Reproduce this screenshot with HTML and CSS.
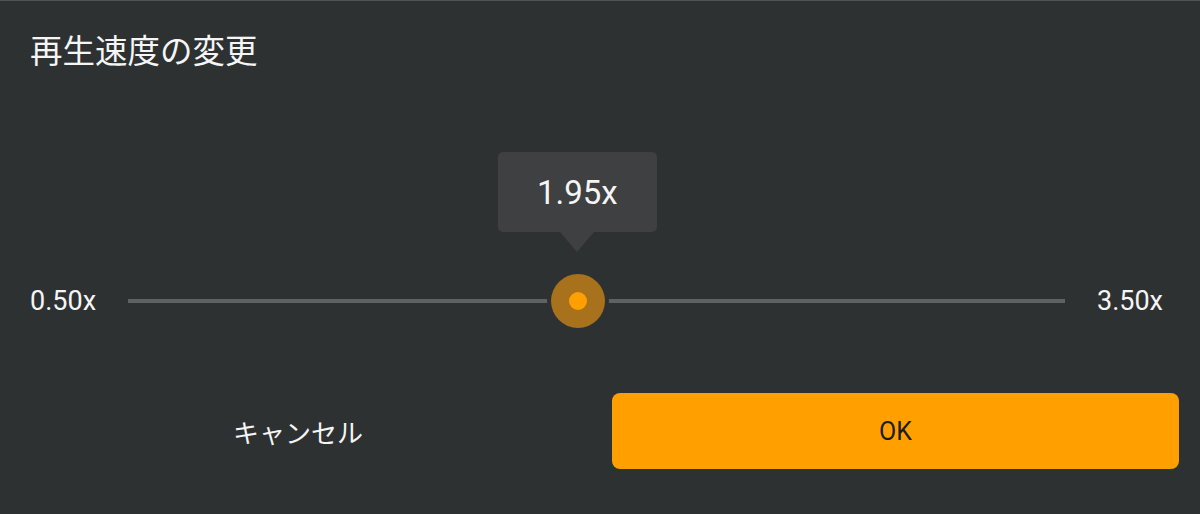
FILE: index.html
```html
<!DOCTYPE html>
<html lang="ja">
<head>
<meta charset="utf-8">
<title>再生速度の変更</title>
<link rel="stylesheet" href="styles.css">
</head>
<body>
<div class="dialog">
  <h1 class="title">再生速度の変更</h1>
  <div class="slider-row">
    <span class="range-label">0.50x</span>
    <div class="track">
      <div class="thumb-anchor" style="left: 48%">
        <div class="tooltip">1.95x</div>
        <div class="thumb"><div class="thumb-dot"></div></div>
      </div>
    </div>
    <span class="range-label">3.50x</span>
  </div>
  <div class="actions">
    <button class="btn btn-cancel">キャンセル</button>
    <button class="btn btn-ok">OK</button>
  </div>
</div>
</body>
</html>
```
FILE: styles.css
```css
html, body {
  margin: 0;
  padding: 0;
  background: #2d3132;
}
.dialog {
  width: 1200px;
  height: 514px;
  box-sizing: border-box;
  background: #2d3132;
  border-top: 1px solid #4e5354;
  font-family: Roboto, "Noto Sans CJK JP", sans-serif;
  color: #ffffff;
  overflow: hidden;
}
.title {
  margin: 0;
  padding: 26px 30px 0;
  font-family: "Noto Sans CJK JP", sans-serif;
  font-weight: 400;
  font-size: 32.5px;
  line-height: 44px;
  height: 44px;
  color: #f5f5f5;
}
.slider-row {
  margin-top: 200px;
  height: 60px;
  display: flex;
  align-items: center;
  padding: 0 37px 0 30px;
  gap: 32px;
}
.range-label {
  flex: none;
  font-size: 27px;
  line-height: 30px;
  color: #f5f5f5;
}
.track {
  flex: 1;
  height: 4px;
  background: #5f6263;
  position: relative;
}
.thumb-anchor {
  position: absolute;
  top: 2px;
  width: 0;
  height: 0;
}
.thumb {
  position: absolute;
  left: -27px;
  top: -27px;
  width: 54px;
  height: 54px;
  border-radius: 50%;
  background: #a8711c;
  box-shadow: 0 0 0 4px #2d3132;
  display: flex;
  align-items: center;
  justify-content: center;
}
.thumb-dot {
  width: 18px;
  height: 18px;
  border-radius: 50%;
  background: #ffa000;
}
.tooltip {
  position: absolute;
  left: -80px;
  top: -149px;
  width: 159px;
  height: 80px;
  background: #3e4042;
  border-radius: 5px;
  display: flex;
  align-items: center;
  justify-content: center;
  font-size: 33px;
  color: #f5f5f5;
}
.tooltip::after {
  content: "";
  position: absolute;
  left: 50%;
  top: 80px;
  margin-left: -17px;
  border-left: 17px solid transparent;
  border-right: 17px solid transparent;
  border-top: 20px solid #3e4042;
}
.actions {
  margin-top: 62px;
  display: flex;
  gap: 24px;
  padding: 0 21px;
  height: 76px;
}
.btn {
  flex: 1 1 0;
  min-width: 0;
  padding: 0;
  border: none;
  border-radius: 8px;
  font-family: Roboto, "Noto Sans CJK JP", sans-serif;
  font-size: 25px;
  cursor: pointer;
}
.btn-cancel {
  background: transparent;
  color: #f5f5f5;
  font-family: "Noto Sans CJK JP", sans-serif;
  font-size: 26px;
  text-indent: -13px;
}
.btn-ok {
  background: #ffa000;
  color: #1c1c1c;
  font-size: 25px;
}
```
